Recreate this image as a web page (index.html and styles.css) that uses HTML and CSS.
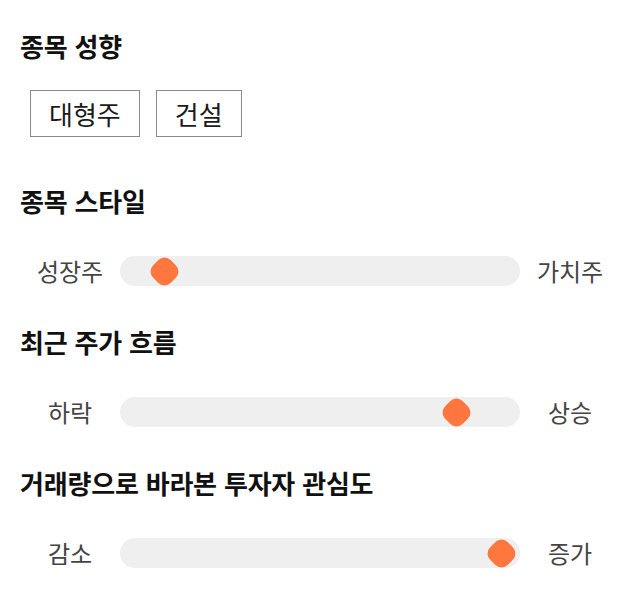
FILE: index.html
```html
<!DOCTYPE html>
<html lang="ko">
<head>
<meta charset="utf-8">
<title>종목 성향</title>
<link rel="stylesheet" href="styles.css">
</head>
<body>
<main class="page">
  <section class="section section-tags">
    <h2 class="title">종목 성향</h2>
    <div class="tags">
      <span class="tag">대형주</span>
      <span class="tag">건설</span>
    </div>
  </section>

  <section class="section">
    <h2 class="title">종목 스타일</h2>
    <div class="slider-row">
      <span class="end-label">성장주</span>
      <div class="track"><span class="thumb" style="left: calc(8% - 0.08 * 30px)"></span></div>
      <span class="end-label">가치주</span>
    </div>
  </section>

  <section class="section">
    <h2 class="title">최근 주가 흐름</h2>
    <div class="slider-row">
      <span class="end-label">하락</span>
      <div class="track"><span class="thumb" style="left: calc(87% - 0.87 * 30px)"></span></div>
      <span class="end-label">상승</span>
    </div>
  </section>

  <section class="section">
    <h2 class="title">거래량으로 바라본 투자자 관심도</h2>
    <div class="slider-row">
      <span class="end-label">감소</span>
      <div class="track"><span class="thumb" style="left: calc(99% - 0.99 * 30px)"></span></div>
      <span class="end-label">증가</span>
    </div>
  </section>
</main>
</body>
</html>
```

FILE: styles.css
```css
* {
  box-sizing: border-box;
}

html, body {
  margin: 0;
  padding: 0;
  background: #ffffff;
}

body {
  font-family: "Noto Sans CJK KR", "Noto Sans", sans-serif;
  color: #111111;
}

.page {
  display: flex;
  flex-direction: column;
  gap: 40px;
  padding: 30px 20px;
}

.section {
  display: flex;
  flex-direction: column;
}

.section-tags {
  margin-bottom: 8px;
}

.title {
  margin: 0;
  font-size: 26px;
  line-height: 32px;
  font-weight: 700;
  color: #111111;
  letter-spacing: -0.2px;
}

.section .tags {
  margin-top: 28px;
}

.section .slider-row {
  margin-top: 39px;
}

.tags {
  display: flex;
  gap: 16px;
  padding-left: 10px;
}

.tag {
  display: flex;
  align-items: center;
  justify-content: center;
  height: 47px;
  padding: 0 18px;
  border: 1px solid #8a8a8a;
  font-size: 26px;
  color: #1a1a1a;
  background: #ffffff;
}

.slider-row {
  display: flex;
  align-items: center;
  height: 30px;
}

.end-label {
  width: 100px;
  text-align: center;
  font-size: 24px;
  color: #444444;
  line-height: 30px;
}

.track {
  position: relative;
  flex: 1;
  height: 30px;
  border-radius: 15px;
  background: #efefef;
}

.thumb {
  position: absolute;
  top: 0;
  width: 30px;
  height: 30px;
  display: block;
}

.thumb::before {
  content: "";
  position: absolute;
  left: 2.5px;
  top: 2.5px;
  width: 25px;
  height: 25px;
  border-radius: 9px;
  background: #ff763f;
  transform: rotate(45deg);
}
```
